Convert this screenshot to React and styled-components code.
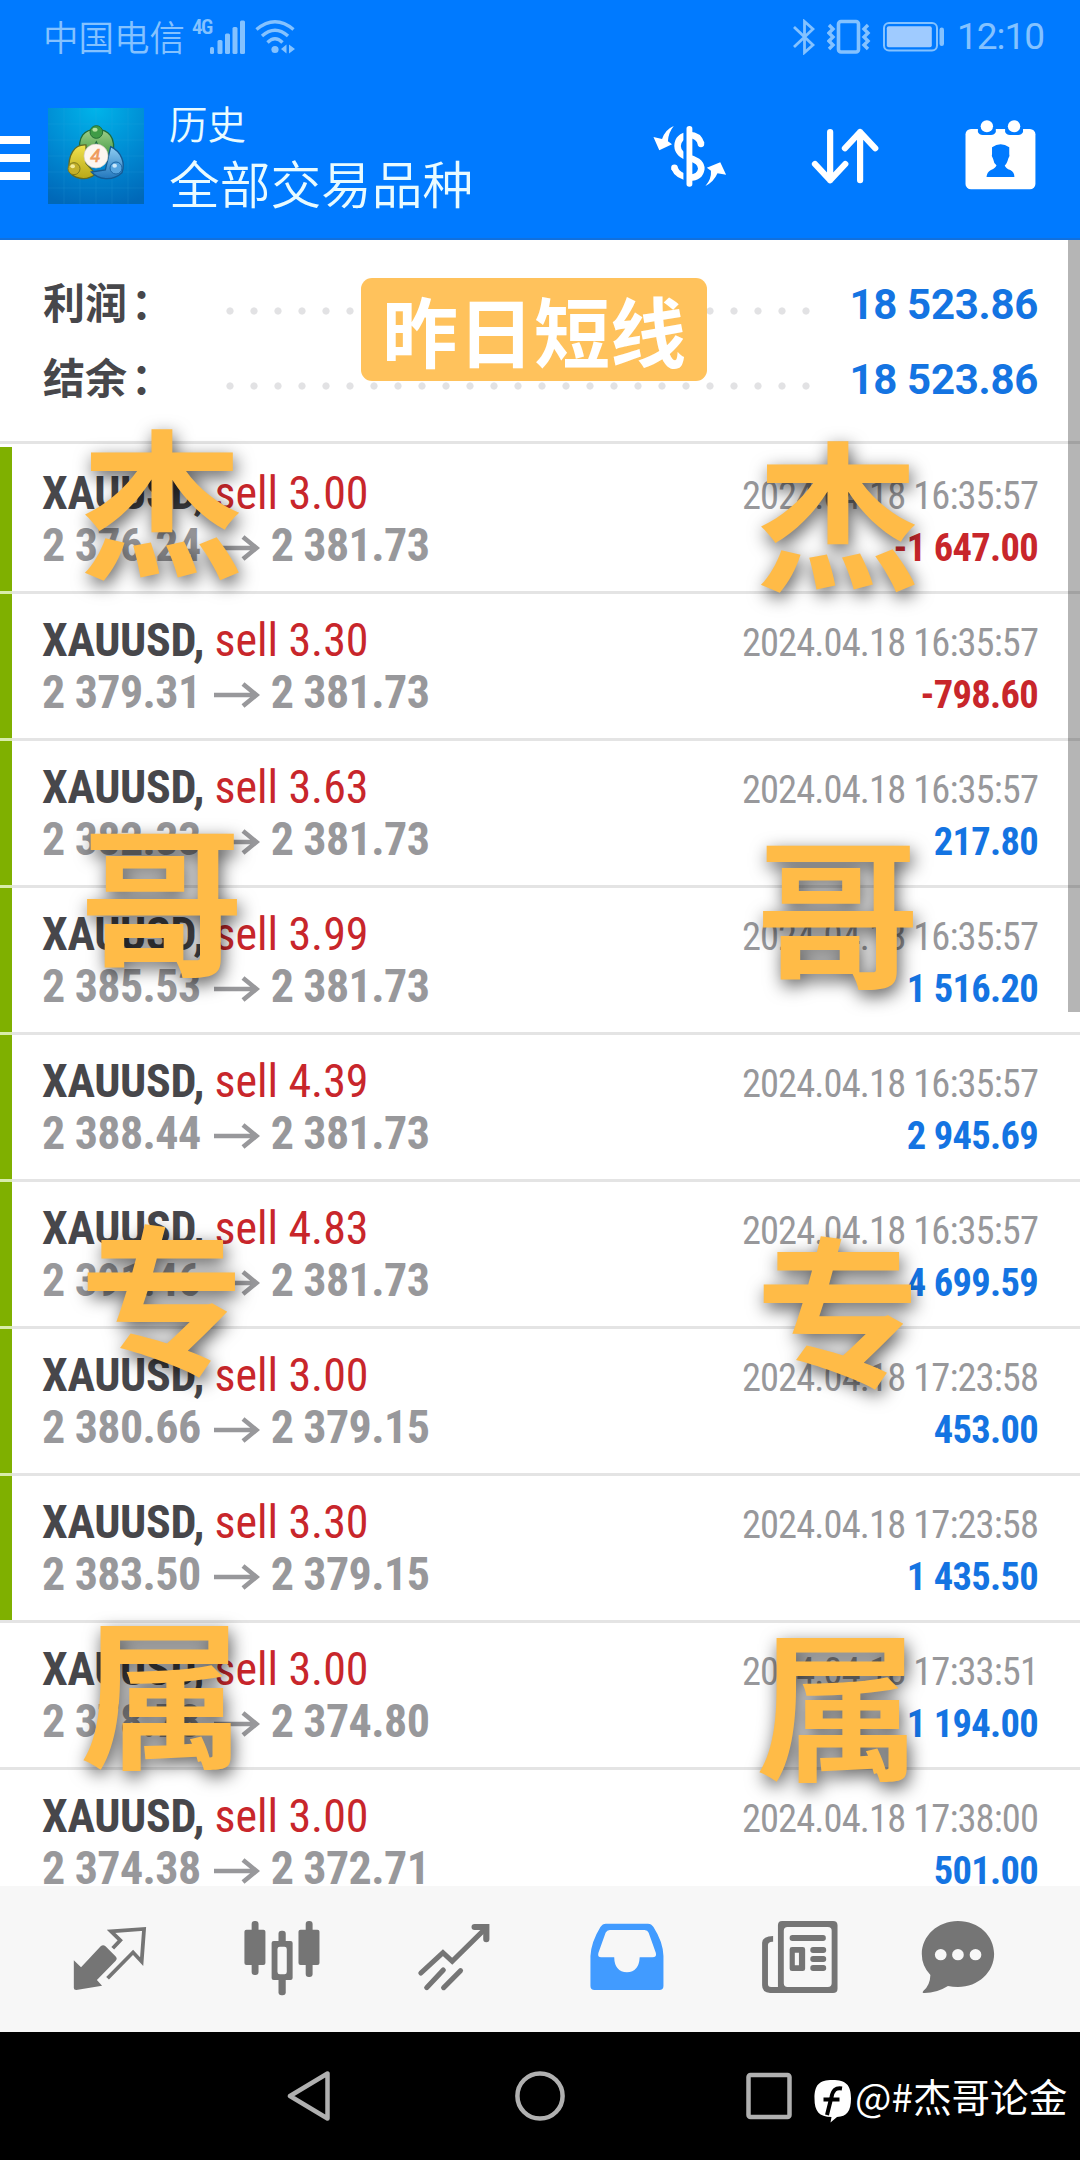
import React from "react";
import styled, { createGlobalStyle } from "styled-components";

const fonts = {
  cjk: `"Noto Sans CJK SC", sans-serif`,
  roboto: `Roboto, "Noto Sans CJK SC", sans-serif`,
  condensed: `"Roboto Condensed", Roboto, sans-serif`,
};

const colors = {
  blue: "#007aff",
  status: "#84c2ff",
  title: "#e9fbff",
  profit: "#1474e2",
  loss: "#c8262b",
  sell: "#c8262b",
  dark: "#47474b",
  grey: "#98989b",
  line: "#e4e4e4",
  green: "#7fb000",
  nav: "#757575",
  navActive: "#419bff",
  system: "#b0b0b0",
  mark: "#ffbb47",
};

const deals = [
  { lots: "3.00", open: "2 376.24", close: "2 381.73", time: "2024.04.18 16:35:57", profit: "-1 647.00", marked: true },
  { lots: "3.30", open: "2 379.31", close: "2 381.73", time: "2024.04.18 16:35:57", profit: "-798.60", marked: true },
  { lots: "3.63", open: "2 382.33", close: "2 381.73", time: "2024.04.18 16:35:57", profit: "217.80", marked: true },
  { lots: "3.99", open: "2 385.53", close: "2 381.73", time: "2024.04.18 16:35:57", profit: "1 516.20", marked: true },
  { lots: "4.39", open: "2 388.44", close: "2 381.73", time: "2024.04.18 16:35:57", profit: "2 945.69", marked: true },
  { lots: "4.83", open: "2 391.46", close: "2 381.73", time: "2024.04.18 16:35:57", profit: "4 699.59", marked: true },
  { lots: "3.00", open: "2 380.66", close: "2 379.15", time: "2024.04.18 17:23:58", profit: "453.00", marked: true },
  { lots: "3.30", open: "2 383.50", close: "2 379.15", time: "2024.04.18 17:23:58", profit: "1 435.50", marked: true },
  { lots: "3.00", open: "2 378.78", close: "2 374.80", time: "2024.04.18 17:33:51", profit: "1 194.00" },
  { lots: "3.00", open: "2 374.38", close: "2 372.71", time: "2024.04.18 17:38:00", profit: "501.00" },
];

const GlobalStyle = createGlobalStyle`
  body {
    margin: 0;
    background: #000;
  }
  svg {
    display: block;
    flex-shrink: 0;
  }
`;

const Screen = styled.div`
  position: relative;
  display: flex;
  flex-direction: column;
  width: 1080px;
  height: 2160px;
  overflow: hidden;
  background: #fff;
`;

/* ---------- header ---------- */

const Header = styled.header`
  box-sizing: border-box;
  height: 240px;
  background: ${colors.blue};
  border-bottom: 2px solid #1170dd;
`;

const StatusBar = styled.div`
  display: flex;
  align-items: center;
  justify-content: space-between;
  height: 74px;
  padding: 0 35px 0 43px;
  color: ${colors.status};
`;

const StatusGroup = styled.div`
  display: flex;
  align-items: center;
`;

const Carrier = styled.span`
  height: 74px;
  font: 350 35.5px/72px ${fonts.cjk};
`;

const Network = styled.span`
  align-self: flex-start;
  width: 18px;
  margin: 17px 0 0 7px;
  font: 600 21px/20px ${fonts.condensed};
  letter-spacing: -1.5px;
`;

const StatusIcons = styled(StatusGroup)`
  gap: ${(p) => p.$gap}px;
`;

const Clock = styled.span`
  width: 88px;
  margin-left: 12px;
  font: 400 37px/74px ${fonts.roboto};
  letter-spacing: -1px;
  white-space: nowrap;
`;

const Toolbar = styled.div`
  display: flex;
  align-items: center;
  height: 164px;
`;

const Menu = styled.div`
  display: flex;
  flex-direction: column;
  gap: 10px;
  width: 30px;
  margin: 4px 18px 0 0;
`;

const MenuBar = styled.span`
  height: 8px;
  background: #fff;
`;

const Titles = styled.div`
  flex: 1;
  margin: -3px 0 0 25px;
  color: ${colors.title};
`;

const Subtitle = styled.div`
  font: 350 38.5px/54px ${fonts.cjk};
`;

const Title = styled.div`
  font: 350 50.7px/66px ${fonts.cjk};
`;

const Actions = styled.div`
  display: flex;
  gap: 75px;
  padding-right: 40px;
`;

/* ---------- history ---------- */

const History = styled.main`
  position: relative;
  height: 1646px;
  overflow: hidden;
`;

const Summary = styled.section`
  box-sizing: border-box;
  height: 204px;
  padding: 26px 42px 0 43px;
  border-bottom: 3px solid ${colors.line};
`;

const SummaryRow = styled.div`
  display: flex;
  align-items: baseline;
  height: 75px;
  line-height: 69px;
`;

const SummaryLabel = styled.span`
  width: 175px;
  font-family: ${fonts.cjk};
  font-weight: 700;
  font-size: 42px;
  color: ${colors.dark};
`;

const Colon = styled.span`
  margin-left: 4px;
`;

const Dots = styled.span`
  align-self: flex-start;
  width: 600px;
  height: 10px;
  margin-top: 40px;
  background: radial-gradient(circle, #e2e2e4 3.2px, transparent 4px) 0 0 / 24px 10px;
`;

const SummaryValue = styled.span`
  flex: 1;
  text-align: right;
  font-family: ${fonts.roboto};
  font-weight: 700;
  font-size: 42px;
  letter-spacing: -0.3px;
  color: ${colors.profit};
`;

const Deal = styled.article`
  position: relative;
  box-sizing: border-box;
  height: 147px;
  padding: 20px 42px 0 42px;
  border-bottom: 3px solid ${colors.line};

  &:first-of-type {
    height: 150px;
    padding-top: 23px;
  }
`;

const DealMark = styled.i`
  position: absolute;
  left: 0;
  bottom: 0;
  width: 12px;
  height: 144px;
`;

const GreenMark = styled(DealMark)`
  background: ${colors.green};
`;

const GreenSeam = styled(DealMark)`
  bottom: -3px;
  height: 3px;
  background: #d8ecab;
`;

const DealLine = styled.div`
  display: flex;
  align-items: baseline;
  justify-content: space-between;
  height: 52px;
  line-height: 52px;
  font-family: ${fonts.condensed};
  white-space: pre;
`;

const Symbol = styled.span`
  font-size: 46px;
  font-weight: 700;
  letter-spacing: -0.35px;
  color: ${colors.dark};
`;

const Side = styled.span`
  font-weight: 430;
  letter-spacing: -0.05px;
  color: ${colors.sell};
`;

const Prices = styled.span`
  display: flex;
  align-items: baseline;
  font-size: 46px;
  font-weight: 700;
  letter-spacing: -0.6px;
  color: ${colors.grey};

  svg {
    margin: 0 11px 0 13px;
  }
`;

const Time = styled.span`
  font-size: 38.5px;
  font-weight: 400;
  letter-spacing: -0.9px;
  color: ${colors.grey};
`;

const Profit = styled.span`
  font-size: 38.5px;
  font-weight: 700;
  letter-spacing: -0.7px;
  color: ${(p) => (p.$loss ? colors.loss : colors.profit)};
`;

const Scrollbar = styled.div`
  position: absolute;
  top: 0;
  right: 0;
  width: 12px;
  height: 772px;
  background: rgba(0, 0, 0, 0.29);
`;

/* ---------- bottom ---------- */

const TabBar = styled.nav`
  display: grid;
  grid-template-columns: repeat(5, 172.5px) 144px;
  justify-items: center;
  box-sizing: border-box;
  height: 146px;
  padding: 31px 0 0 23px;
  background: #f7f7f7;
`;

const SystemBar = styled.footer`
  display: flex;
  align-items: center;
  justify-content: center;
  gap: 166px;
  height: 128px;
  background: #000;
`;

/* ---------- overlays ---------- */

const Tag = styled.div`
  position: absolute;
  left: 361px;
  top: 278px;
  width: 346px;
  height: 103px;
  border-radius: 11px;
  background: #ffc25c;
  font: 700 76px/103px ${fonts.cjk};
  text-align: center;
  color: #fff;
`;

const Watermark = styled.div`
  position: absolute;
  left: ${(p) => p.$x}px;
  top: ${(p) => p.$y}px;
  display: flex;
  flex-direction: column;
  font: 700 160px/398px ${fonts.cjk};
  color: ${colors.mark};
  text-shadow: 2px 6px 18px rgba(0, 0, 0, 0.65);
  transform: scaleX(1.03);
`;

const Signature = styled.div`
  position: absolute;
  left: 814px;
  top: 2067px;
  display: flex;
  align-items: center;
  gap: 3px;
  font: 400 38.6px/56px ${fonts.cjk};
  color: #fff;
  white-space: nowrap;

  svg {
    margin-top: 12px;
  }
`;

/* ---------- icons ---------- */

const SignalIcon = () => (
  <svg width="36" height="36" viewBox="0 0 36 36" fill={colors.status}>
    <rect x="0" y="28" width="4" height="7" rx="1.5" />
    <rect x="7.5" y="21" width="5" height="14" rx="1.5" />
    <rect x="15" y="14.5" width="5" height="20.5" rx="1.5" />
    <rect x="22.5" y="8" width="5" height="27" rx="1.5" />
    <rect x="30" y="1.5" width="5" height="33.5" rx="1.5" />
  </svg>
);

const WifiIcon = () => (
  <svg width="42" height="36" viewBox="0 0 42 36" fill="none" stroke={colors.status} strokeWidth="3.4">
    <path d="M1.5 10.5Q20 -5 38.5 10.5" />
    <path d="M7 17Q20 5.5 33 17" />
    <path d="M12.5 23.5Q20 16 27.5 23.5" />
    <circle cx="20" cy="30.5" r="3.6" fill={colors.status} stroke="none" />
    <path d="M31.5 25.5V34.5L26 30zM34 25.5V34.5L40 30z" fill={colors.status} stroke="none" />
  </svg>
);

const BluetoothIcon = () => (
  <svg width="22" height="36" viewBox="0 0 22 36" fill="none" stroke={colors.status} strokeWidth="2.8">
    <path d="M1 8L20 26L11.5 33.5V2.5L20 10L1 28" />
  </svg>
);

const VibrateIcon = () => (
  <svg width="44" height="36" viewBox="0 0 44 36" fill="none" stroke={colors.status} strokeWidth="3.4">
    <rect x="11.5" y="2.5" width="20" height="30.5" rx="2.5" strokeWidth="3.6" />
    <path d="M2 6l4 4-4 4 4 4-4 4 4 4-4 4M41 6l-4 4 4 4-4 4 4 4-4 4 4 4" />
  </svg>
);

const BatteryIcon = () => (
  <svg width="62" height="30" viewBox="0 0 62 30" fill="none">
    <rect x="1" y="1" width="53" height="27.5" rx="5" stroke={colors.status} strokeWidth="2" />
    <rect x="3.8" y="4.2" width="45" height="21" rx="2" fill="#9fcbff" />
    <rect x="56.5" y="5.5" width="4.5" height="18.5" rx="2.2" fill={colors.status} />
  </svg>
);

const AppLogo = () => (
  <svg width="96" height="96" viewBox="54 54 288 288">
    <defs>
      <radialGradient id="sky" cx="0.5" cy="0" r="1.05">
        <stop offset="0" stopColor="#00b4ea" />
        <stop offset="0.6" stopColor="#0086d0" />
        <stop offset="1" stopColor="#0068b8" />
      </radialGradient>
      <linearGradient id="green" x2="0" y2="1">
        <stop offset="0" stopColor="#9fcf8a" />
        <stop offset="1" stopColor="#2f8f34" />
      </linearGradient>
      <linearGradient id="yellow" x2="0" y2="1">
        <stop offset="0" stopColor="#f2e24e" />
        <stop offset="1" stopColor="#b8a818" />
      </linearGradient>
      <linearGradient id="cyan" x2="0" y2="1">
        <stop offset="0" stopColor="#8fcdf2" />
        <stop offset="1" stopColor="#2277bd" />
      </linearGradient>
    </defs>
    <rect x="54" y="54" width="288" height="288" fill="url(#sky)" />
    <path
      d="M102 54V342M150 54V342M198 54V342M246 54V342M294 54V342M54 102H342M54 150H342M54 198H342M54 246H342M54 294H342"
      stroke="#35b2e6"
      strokeOpacity="0.15"
      strokeWidth="3"
    />
    <path d="M150 192C142 138 164 118 199 118S260 140 248 196L228 216L199 156L172 205Z" fill="url(#green)" stroke="#1d6b3c" strokeWidth="4" />
    <path d="M168 165C132 162 114 196 117 240C126 266 168 276 197 252L168 220Z" fill="url(#yellow)" stroke="#5f6a26" strokeWidth="4" />
    <path d="M242 170C276 186 286 220 276 248C246 276 204 268 184 246L226 240Z" fill="url(#cyan)" stroke="#145a94" strokeWidth="4" />
    <circle cx="199" cy="126" r="19" fill="#3f9b46" stroke="#246f36" strokeWidth="3" />
    <circle cx="132" cy="236" r="18" fill="#c3b02a" stroke="#7f7a1c" strokeWidth="3" />
    <circle cx="258" cy="234" r="18" fill="#57a5df" stroke="#1c66a5" strokeWidth="3" />
    <ellipse cx="195" cy="119" rx="8" ry="6" fill="#b5e0a0" />
    <ellipse cx="128" cy="229" rx="7" ry="6" fill="#f3eb9a" />
    <ellipse cx="254" cy="227" rx="7" ry="6" fill="#cbe8fb" />
    <circle cx="198" cy="198" r="36" fill="#fdf6f0" stroke="#cfc9c0" strokeWidth="2" />
    <text x="196" y="217" textAnchor="middle" fontFamily="Liberation Sans" fontStyle="italic" fontSize="54" fill="#ef9a5c" stroke="#ef9a5c" strokeWidth="2">
      4
    </text>
  </svg>
);

const ActionIcon = ({ box, children }) => (
  <svg width="80" height="80" viewBox={box} preserveAspectRatio="none" fill="#fff">
    {children}
  </svg>
);

const CurrencyIcon = () => (
  <ActionIcon box="321 348 232.3 240">
    <path d="M470 432Q462 405 436 405Q402 408 401 438Q402 464 436 474Q471 484 470 507Q466 533 436 533Q402 530 391 503" fill="none" stroke="#fff" strokeWidth="19" />
    <circle cx="469" cy="432" r="9.5" />
    <circle cx="392" cy="503" r="9.5" />
    <rect x="418" y="370" width="14" height="200" fill={colors.blue} />
    <rect x="427" y="378" width="17" height="182" rx="8" />
    <path d="M390 378Q366 388 356 417L331 411L348 451L385 433L373 424Q374 398 390 378Z" />
    <path d="M482 558Q500 536 498 512L486 503L525 487L542 524L517 520Q506 546 482 558Z" />
  </ActionIcon>
);

const SortIcon = () => (
  <ActionIcon box="772 348 232.3 240">
    <path
      d="M845 396V541M801 492L845 541L889 492M932 541V396M888 445L932 396L976 445"
      fill="none"
      stroke="#fff"
      strokeWidth="18"
      strokeLinecap="round"
      strokeLinejoin="round"
    />
  </ActionIcon>
);

const CalendarIcon = () => (
  <ActionIcon box="1220 348 232.3 240">
    <rect x="1236" y="387" width="203" height="181" rx="16" />
    <path d="M1272 380H1324V396Q1320 405 1310 405H1286Q1276 405 1272 396ZM1351 380H1403V396Q1399 405 1389 405H1365Q1355 405 1351 396Z" fill={colors.blue} />
    <circle cx="1298" cy="379" r="18" />
    <circle cx="1377" cy="379" r="18" />
    <path
      d="M1313 442Q1338 424 1363 442V462Q1366 470 1360 476Q1356 492 1350 496Q1352 506 1366 510Q1378 516 1378 531H1297Q1298 516 1310 510Q1324 504 1326 496Q1318 490 1316 476Q1310 470 1313 462Z"
      fill={colors.blue}
    />
  </ActionIcon>
);

const PriceArrow = () => (
  <svg width="46" height="26" viewBox="0 0 46 26" fill="none" stroke={colors.grey} strokeWidth="4.6">
    <path d="M0 13H42M29 2L42.5 13L29 24" />
  </svg>
);

const TabIcon = ({ box, color = colors.nav, children }) => (
  <svg width="80" height="80" viewBox={box} preserveAspectRatio="none" fill={color} stroke="none">
    {children}
  </svg>
);

const QuotesIcon = () => (
  <TabIcon box="201 111 232.3 240">
    <path d="M215 241L236 262L293 199Q300 192 307 199L336 229Q343 236 336 243L282 300L297 317L222 330Q215 330 215 324Z" />
    <path d="M328 205L350 181L323 154L419 147L412 245L387 217L313 295" fill="none" stroke={colors.nav} strokeWidth="11" />
  </TabIcon>
);

const ChartIcon = () => (
  <TabIcon box="701 111 232.3 240">
    <rect x="729" y="123" width="20" height="162" rx="9" />
    <rect x="708" y="149" width="61" height="106" rx="6" />
    <rect x="886" y="123" width="20" height="168" rx="9" />
    <rect x="865" y="149" width="61" height="106" rx="6" />
    <rect x="807" y="152" width="21" height="194" rx="9" />
    <rect x="787" y="183" width="61" height="117" rx="6" />
    <rect x="804" y="200" width="27" height="83" rx="7" fill="#f7f7f7" />
  </TabIcon>
);

const TradeIcon = () => (
  <TabIcon box="1201 111 232.3 240">
    <path
      d="M1221 279L1285 218L1312 244L1410 144M1238 323L1286 270M1287 323L1336 272"
      fill="none"
      stroke={colors.nav}
      strokeWidth="15"
      strokeLinecap="round"
    />
    <path d="M1377 141H1411V178" fill="none" stroke={colors.nav} strokeWidth="18" strokeLinecap="round" />
  </TabIcon>
);

const HistoryIcon = () => (
  <TabIcon box="135 111 232.3 240" color={colors.navActive}>
    <path
      fillRule="evenodd"
      d="M190 131H312Q322 131 328 141Q356 186 357 228V318Q357 330 345 330H157Q145 330 145 318V228Q147 186 174 141Q180 131 190 131ZM201 150Q193 150 189 158L168 219Q165 232 176 232H214Q215 276 251 277Q286 276 288 232H325Q338 232 335 219L314 158Q311 150 302 150Z"
    />
  </TabIcon>
);

const NewsIcon = () => (
  <TabIcon box="636 111 232.3 240">
    <path
      fillRule="evenodd"
      d="M703 123H851Q864 123 864 136V326Q864 339 851 339H668Q645 338 645 316V188Q647 168 677 168V185Q662 184 662 196V312Q662 321 671 321H691V136Q691 123 703 123ZM719 141Q708 141 708 152V310Q708 321 719 321H836Q847 321 847 310V152Q847 141 836 141Z"
    />
    <rect x="725" y="165" width="105" height="18" rx="8" />
    <path fillRule="evenodd" d="M732 201H763Q770 201 770 208V266Q770 273 763 273H732Q725 273 725 266V208Q725 201 732 201ZM740 218V256H752V218Z" />
    <rect x="785" y="201" width="46" height="18" rx="8" />
    <rect x="785" y="228" width="46" height="18" rx="8" />
    <rect x="785" y="255" width="46" height="18" rx="8" />
  </TabIcon>
);

const ChatIcon = () => (
  <TabIcon box="1097 111 232.3 240">
    <path d="M1213 123C1274 123 1318 168 1318 222S1272 321 1213 321Q1198 321 1184 318Q1150 340 1113 339Q1108 338 1113 332Q1132 316 1133 285Q1108 258 1108 222C1108 168 1154 123 1213 123Z" />
    <circle cx="1163" cy="224" r="17" fill="#f7f7f7" />
    <circle cx="1213" cy="224" r="17" fill="#f7f7f7" />
    <circle cx="1264" cy="224" r="17" fill="#f7f7f7" />
  </TabIcon>
);

const BackKey = () => (
  <svg width="62" height="54" viewBox="0 0 62 54" fill="none" stroke={colors.system} strokeWidth="4.5" strokeLinejoin="round">
    <path d="M40.5 4.5V49.5L3 27Z" />
  </svg>
);

const HomeKey = () => (
  <svg width="50" height="50" viewBox="0 0 50 50" fill="none" stroke={colors.system} strokeWidth="4.5">
    <circle cx="25" cy="25" r="22.6" />
  </svg>
);

const RecentKey = () => (
  <svg width="62" height="50" viewBox="0 0 62 50" fill="none" stroke={colors.system} strokeWidth="4.5">
    <rect x="17.5" y="4" width="41" height="42" rx="2" />
  </svg>
);

const SignatureLogo = () => (
  <svg width="38" height="44" viewBox="0 0 38 44">
    <path d="M18.5 1C32 1 37 6 37 19.5C37 32 33 37.5 23 38L16.5 43.5L17.5 38C5 38 0.5 32 0.5 19.5C0.5 6 5 1 18.5 1Z" fill="#fff" />
    <path d="M28 9.5C21.5 8.5 19 11 17.5 18L13 36M9.5 20.5H25.5" fill="none" stroke="#000" strokeWidth="4" />
  </svg>
);

/* ---------- page ---------- */

const DealRow = ({ deal, seam }) => (
  <Deal>
    {deal.marked && <GreenMark />}
    {seam && <GreenSeam />}
    <DealLine>
      <Symbol>
        XAUUSD, <Side>sell {deal.lots}</Side>
      </Symbol>
      <Time>{deal.time}</Time>
    </DealLine>
    <DealLine>
      <Prices>
        {deal.open}
        <PriceArrow />
        {deal.close}
      </Prices>
      <Profit $loss={deal.profit.startsWith("-")}>{deal.profit}</Profit>
    </DealLine>
  </Deal>
);

const SummaryItem = ({ label, value }) => (
  <SummaryRow>
    <SummaryLabel>
      {label}
      <Colon>：</Colon>
    </SummaryLabel>
    <Dots />
    <SummaryValue>{value}</SummaryValue>
  </SummaryRow>
);

// 属 is drawn a few pixels higher than the even step of the other three
const MarkChar = styled.span`
  &:last-child {
    margin-top: -4px;
  }
`;

const NameMark = ({ x, y }) => (
  <Watermark $x={x} $y={y}>
    {["杰", "哥", "专", "属"].map((char) => (
      <MarkChar key={char}>{char}</MarkChar>
    ))}
  </Watermark>
);

const App = () => (
  <>
    <GlobalStyle />
    <Screen>
      <Header>
        <StatusBar>
          <StatusGroup>
            <Carrier>中国电信</Carrier>
            <Network>4G</Network>
            <StatusIcons $gap={9}>
              <SignalIcon />
              <WifiIcon />
            </StatusIcons>
          </StatusGroup>
          <StatusGroup>
            <StatusIcons $gap={12}>
              <BluetoothIcon />
              <VibrateIcon />
              <BatteryIcon />
            </StatusIcons>
            <Clock>12:10</Clock>
          </StatusGroup>
        </StatusBar>
        <Toolbar>
          <Menu>
            <MenuBar />
            <MenuBar />
            <MenuBar />
          </Menu>
          <AppLogo />
          <Titles>
            <Subtitle>历史</Subtitle>
            <Title>全部交易品种</Title>
          </Titles>
          <Actions>
            <CurrencyIcon />
            <SortIcon />
            <CalendarIcon />
          </Actions>
        </Toolbar>
      </Header>

      <History>
        <Summary>
          <SummaryItem label="利润" value="18 523.86" />
          <SummaryItem label="结余" value="18 523.86" />
        </Summary>
        {deals.map((deal, i) => (
          <DealRow key={i} deal={deal} seam={deal.marked && i < 7} />
        ))}
        <Scrollbar />
      </History>

      <TabBar>
        <QuotesIcon />
        <ChartIcon />
        <TradeIcon />
        <HistoryIcon />
        <NewsIcon />
        <ChatIcon />
      </TabBar>

      <SystemBar>
        <BackKey />
        <HomeKey />
        <RecentKey />
      </SystemBar>

      <Tag>昨日短线</Tag>
      <NameMark x={82} y={297} />
      <NameMark x={758} y={309} />
      <Signature>
        <SignatureLogo />
        @#杰哥论金
      </Signature>
    </Screen>
  </>
);

export default App;
